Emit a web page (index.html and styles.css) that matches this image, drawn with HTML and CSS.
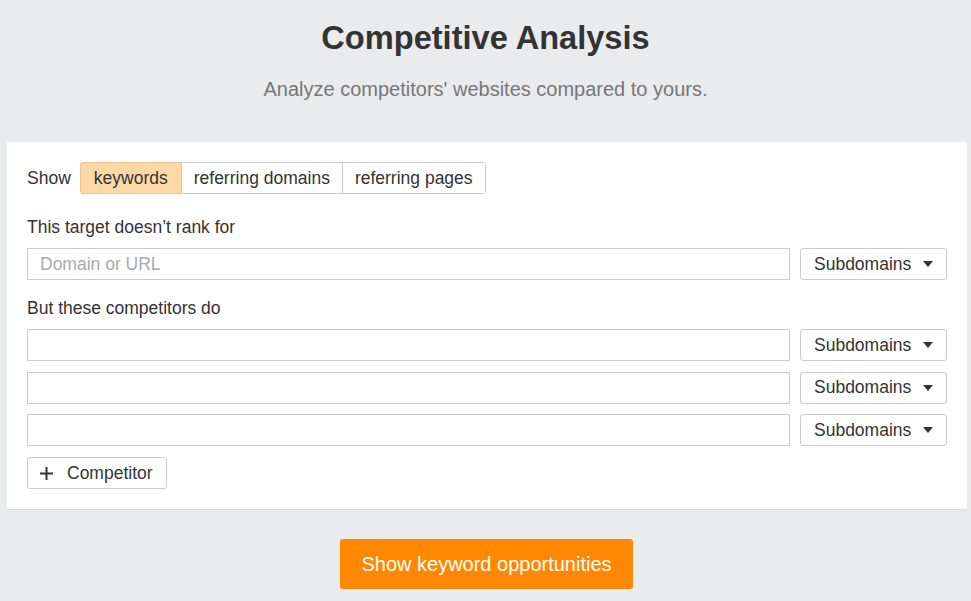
FILE: index.html
```html
<!DOCTYPE html>
<html>
<head>
<meta charset="utf-8">
<link rel="stylesheet" href="styles.css">
</head>
<body>
<div class="page">
  <header class="hero">
    <h1 class="title">Competitive Analysis</h1>
    <p class="subtitle">Analyze competitors' websites compared to yours.</p>
  </header>
  <section class="card">
    <div class="show-row">
      <span class="show-label">Show</span>
      <div class="tabs">
        <button class="tab active">keywords</button>
        <button class="tab">referring domains</button>
        <button class="tab">referring pages</button>
      </div>
    </div>
    <div class="label label-first">This target doesn’t rank for</div>
    <div class="field-row">
      <input class="field" type="text" placeholder="Domain or URL">
      <button class="select">Subdomains <span class="caret"></span></button>
    </div>
    <div class="label label-second">But these competitors do</div>
    <div class="field-list">
      <div class="field-row">
        <input class="field" type="text">
        <button class="select">Subdomains <span class="caret"></span></button>
      </div>
      <div class="field-row">
        <input class="field" type="text">
        <button class="select">Subdomains <span class="caret"></span></button>
      </div>
      <div class="field-row">
        <input class="field" type="text">
        <button class="select">Subdomains <span class="caret"></span></button>
      </div>
    </div>
    <button class="add-btn"><svg class="plus" width="13" height="13" viewBox="0 0 13 13"><path d="M6.5 0v13M0 6.5h13" stroke="#333" stroke-width="2"/></svg>Competitor</button>
  </section>
  <div class="actions">
    <button class="primary">Show keyword opportunities</button>
  </div>
</div>
</body>
</html>
```
FILE: styles.css
```css
* { box-sizing: border-box; }
html, body { margin: 0; padding: 0; }
body {
  background: #eaebed;
  font-family: "Liberation Sans", Arial, sans-serif;
  color: #333;
  width: 971px;
  height: 601px;
  overflow: hidden;
}
.page { padding-top: 18px; }
.hero { text-align: center; }
.title {
  margin: 0;
  font-size: 32.6px;
  font-weight: bold;
  line-height: 40px;
  color: #333;
}
.subtitle {
  margin: 20px 0 0;
  font-size: 20px;
  line-height: 22px;
  color: #777;
}
.card {
  margin: 42px 0 0 7px;
  width: 960px;
  background: #fff;
  border-bottom: 1px solid #dcdde0;
  padding: 20px 20px 20px;
}
.show-row {
  display: flex;
  align-items: center;
}
.show-label { font-size: 17.5px; margin-right: 9px; }
.tabs {
  display: flex;
  border: 1px solid #ccc;
  border-radius: 3px;
}
.tab {
  font-family: inherit;
  font-size: 17.5px;
  color: #333;
  background: #fff;
  border: 0;
  border-left: 1px solid #ccc;
  height: 30px;
  padding: 0 12px;
  margin: 0;
}
.tab:first-child { border-left: 0; }
.tab.active {
  background: #fed9a8;
  box-shadow: 0 0 0 1px #f3c48e;
  border-radius: 3px 0 0 3px;
  padding: 0 13px;
  position: relative;
}
.label {
  font-size: 17.5px;
  line-height: 20px;
  margin-bottom: 11px;
}
.label-first { margin-top: 23px; }
.label-second { margin-top: 18px; }
.field-list {
  display: flex;
  flex-direction: column;
  gap: 10.5px;
}
.field-row {
  display: flex;
  gap: 10px;
}
.field {
  flex: 1;
  height: 32px;
  border: 1px solid #ccc;
  border-radius: 0;
  padding: 0 12px;
  font-family: inherit;
  font-size: 17.5px;
  color: #333;
  outline: none;
}
.field::placeholder { color: #aaa; }
.select {
  width: 147px;
  height: 32px;
  border: 1px solid #ccc;
  border-radius: 3px;
  background: #fff;
  font-family: inherit;
  font-size: 17.5px;
  color: #333;
  padding: 0 13px;
  display: flex;
  align-items: center;
  justify-content: space-between;
}
.caret {
  width: 0; height: 0;
  border-left: 5px solid transparent;
  border-right: 5px solid transparent;
  border-top: 6px solid #333;
}
.add-btn {
  margin-top: 11px;
  height: 32px;
  width: 140px;
  border: 1px solid #ccc;
  border-radius: 3px;
  background: #fff;
  font-family: inherit;
  font-size: 17.5px;
  color: #333;
  display: flex;
  align-items: center;
  padding: 0 12px;
  gap: 14px;
}
.actions {
  display: flex;
  justify-content: center;
  margin-top: 29px;
  padding-left: 2px;
}
.primary {
  width: 293px;
  height: 50px;
  background: #ff8800;
  border: 0;
  border-radius: 3px;
  color: #fff;
  font-family: inherit;
  font-size: 20px;
}
```
